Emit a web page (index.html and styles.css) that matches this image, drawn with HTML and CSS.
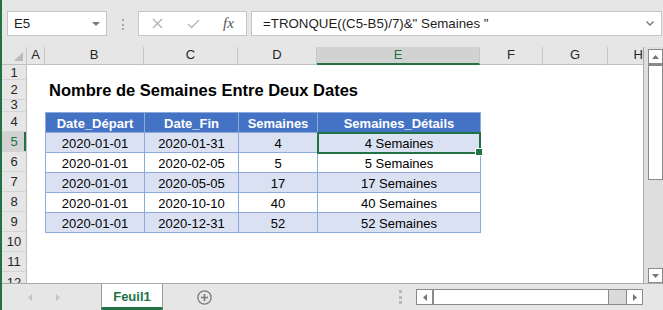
FILE: index.html
```html
<!DOCTYPE html>
<html lang="fr">
<head>
  <meta charset="UTF-8" />
  <title>Feuil1 – Nombre de Semaines</title>
  <link rel="stylesheet" href="styles.css">
</head>
<body>
<div class="app">

  <!-- Formula bar -->
  <div class="formula-bar">
    <div class="name-box">
      <span>E5</span>
      <svg width="8" height="4" viewBox="0 0 8 4"><polygon points="0,0 8,0 4,4" fill="#7a7a7a"/></svg>
    </div>
    <div class="grip"><i></i><i></i><i></i></div>
    <div class="fx-box">
      <svg class="cancel" width="11" height="11" viewBox="0 0 11 11"><path d="M1 1 L10 10 M10 1 L1 10" stroke="#b4b4b4" stroke-width="1.4" fill="none"/></svg>
      <svg class="enter" width="13" height="10" viewBox="0 0 13 10"><path d="M1 5 L4.5 8.5 L12 1" stroke="#b4b4b4" stroke-width="1.4" fill="none"/></svg>
      <span class="fx">fx</span>
    </div>
    <div class="formula">
      <span>=TRONQUE((C5-B5)/7)&amp;" Semaines "</span>
      <svg width="8" height="5" viewBox="0 0 8 5"><path d="M0.5 0.5 L4 4 L7.5 0.5" stroke="#777" stroke-width="1.4" fill="none"/></svg>
    </div>
  </div>

  <!-- Sheet -->
  <div class="work">
    <div class="sheet">
      <div class="corner">
        <svg width="9" height="9" viewBox="0 0 9 9"><polygon points="9,0 9,9 0,9" fill="#b9b9b9"/></svg>
      </div>

      <div class="col-heads">
        <div class="ch">A</div>
        <div class="ch">B</div>
        <div class="ch">C</div>
        <div class="ch">D</div>
        <div class="ch selected">E</div>
        <div class="ch">F</div>
        <div class="ch">G</div>
        <div class="ch last">H</div>
      </div>

      <div class="row-heads">
        <div class="rh">1</div>
        <div class="rh">2</div>
        <div class="rh short">3</div>
        <div class="rh">4</div>
        <div class="rh selected">5</div>
        <div class="rh">6</div>
        <div class="rh">7</div>
        <div class="rh">8</div>
        <div class="rh">9</div>
        <div class="rh">10</div>
        <div class="rh">11</div>
        <div class="rh cut">12</div>
      </div>

      <div class="cells">
        <div class="title">Nombre de Semaines Entre Deux Dates</div>

        <table class="data">
          <colgroup>
            <col class="w-b"><col class="w-c"><col class="w-d"><col class="w-e">
          </colgroup>
          <thead>
            <tr><th>Date_Départ</th><th>Date_Fin</th><th>Semaines</th><th>Semaines_Détails</th></tr>
          </thead>
          <tbody>
            <tr class="band"><td>2020-01-01</td><td>2020-01-31</td><td>4</td><td class="active">4 Semaines</td></tr>
            <tr><td>2020-01-01</td><td>2020-02-05</td><td>5</td><td>5 Semaines</td></tr>
            <tr class="band"><td>2020-01-01</td><td>2020-05-05</td><td>17</td><td>17 Semaines</td></tr>
            <tr><td>2020-01-01</td><td>2020-10-10</td><td>40</td><td>40 Semaines</td></tr>
            <tr class="band"><td>2020-01-01</td><td>2020-12-31</td><td>52</td><td>52 Semaines</td></tr>
          </tbody>
        </table>
      </div>
    </div>

    <div class="vscroll">
      <div class="sb-btn">
        <svg width="7" height="4" viewBox="0 0 7 4"><polygon points="0,4 7,4 3.5,0" fill="#777"/></svg>
      </div>
      <div class="v-thumb"></div>
      <div class="v-track"></div>
      <div class="sb-btn">
        <svg width="7" height="4" viewBox="0 0 7 4"><polygon points="0,0 7,0 3.5,4" fill="#777"/></svg>
      </div>
    </div>
  </div>

  <!-- Sheet tabs -->
  <div class="tabs">
    <div class="tab-nav">
      <svg width="4" height="7" viewBox="0 0 4 7"><polygon points="4,0 4,7 0,3.5" fill="#c3c3c3"/></svg>
      <svg width="4" height="7" viewBox="0 0 4 7"><polygon points="0,0 0,7 4,3.5" fill="#c3c3c3"/></svg>
    </div>
    <div class="tab">Feuil1</div>
    <svg class="add" width="15" height="15" viewBox="0 0 15 15">
      <circle cx="7.5" cy="7.5" r="6.6" stroke="#7b7b7b" stroke-width="1.3" fill="none"/>
      <path d="M7.5 4 V11 M4 7.5 H11" stroke="#7b7b7b" stroke-width="1.6"/>
    </svg>
    <div class="spacer"></div>
    <div class="grip"><i></i><i></i><i></i></div>
    <div class="hscroll">
      <div class="sb-btn">
        <svg width="4" height="7" viewBox="0 0 4 7"><polygon points="4,0 4,7 0,3.5" fill="#777"/></svg>
      </div>
      <div class="h-thumb"></div>
      <div class="h-track"></div>
      <div class="sb-btn">
        <svg width="4" height="7" viewBox="0 0 4 7"><polygon points="0,0 0,7 4,3.5" fill="#777"/></svg>
      </div>
    </div>
  </div>

</div>
</body>
</html>
```

FILE: styles.css
```css
:root {
  --chrome: #e6e6e6;
  --head-sel: #d2d2d2;
  --green: #217346;
  --line: #ababab;
  --table-head: #4472c4;
  --table-band: #d9e1f2;
  --table-line: #8ea9db;
  --cols: 18px 99px 94px 79px 163px 63px 65px 35px;
  --rows: 15px 20px 12px repeat(8, 20px) 11px;
}

* {
  box-sizing: border-box;
}

body {
  margin: 0;
  font-family: "Liberation Sans", Arial, sans-serif;
  background: var(--chrome);
}

.app {
  width: 663px;
  height: 310px;
  border-left: 2px solid var(--green);
  background: var(--chrome);
  overflow: hidden;
}

/* formula bar */

.formula-bar {
  height: 47px;
  display: flex;
  align-items: flex-start;
  padding-top: 11px;
}

.name-box {
  margin-left: 5px;
  width: 100px;
  height: 25px;
  border: 1px solid #c6c6c6;
  background: #fff;
  display: flex;
  align-items: center;
  justify-content: space-between;
  padding: 0 6px;
  font-size: 13.3px;
  color: #1e1e1e;
}

.grip {
  display: flex;
  flex-direction: column;
  gap: 2.5px;
}

.grip i {
  display: block;
  width: 2px;
  height: 2px;
  background: #a8a8a8;
}

.formula-bar .grip {
  margin: 8px 0 0 15px;
}

.fx-box {
  margin-left: 14px;
  width: 109px;
  height: 25px;
  border: 1px solid #c6c6c6;
  background: #fff;
  display: flex;
  align-items: center;
  padding-left: 13px;
}

.fx-box .enter {
  margin-left: 24px;
}

.fx {
  margin-left: 23px;
  font-family: "Liberation Serif", serif;
  font-style: italic;
  font-size: 15px;
  color: #555;
}

.formula {
  margin-left: 4px;
  width: 411px;
  height: 25px;
  border: 1px solid #c6c6c6;
  background: #fff;
  display: flex;
  align-items: center;
  justify-content: space-between;
  padding: 0 7px 0 11px;
  font-size: 13.3px;
  color: #1e1e1e;
}

/* sheet */

.work {
  display: flex;
  height: 236px;
}

.sheet {
  width: 641px;
  display: grid;
  grid-template-columns: 25px 616px;
  grid-template-rows: 18px 218px;
}

.corner {
  background: var(--chrome);
  border-right: 1px solid #c8c8c8;
  border-bottom: 1px solid #bfbfbf;
  display: flex;
  align-items: flex-end;
  justify-content: flex-end;
  padding: 0 3px 3px 0;
}

.col-heads {
  display: grid;
  grid-template-columns: var(--cols);
  background: var(--chrome);
}

.ch {
  border-right: 1px solid #c8c8c8;
  border-bottom: 1px solid #bfbfbf;
  font-size: 13px;
  color: #262626;
  display: flex;
  align-items: flex-end;
  justify-content: center;
  padding-bottom: 2px;
}

.ch.selected {
  background: var(--head-sel);
  color: var(--green);
  border-bottom: 2px solid var(--green);
  padding-bottom: 1px;
}

.ch.last {
  border-right: none;
  justify-content: flex-end;
  padding-right: 0;
}

.row-heads {
  display: grid;
  grid-template-rows: var(--rows);
  background: var(--chrome);
  border-right: 1px solid #bfbfbf;
}

.rh {
  border-bottom: 1px solid #d4d4d4;
  font-size: 13px;
  color: #262626;
  display: flex;
  align-items: center;
  justify-content: center;
  overflow: hidden;
  line-height: 15px;
}

.rh.short {
  align-items: flex-end;
  line-height: 12px;
}

.rh.cut {
  align-items: flex-start;
  padding-top: 3px;
  border-bottom: none;
}

.rh.selected {
  background: var(--head-sel);
  color: var(--green);
  box-shadow: inset -2px 0 0 var(--green);
}

.cells {
  background: #fff;
  display: grid;
  grid-template-columns: var(--cols);
  grid-template-rows: var(--rows);
}

.title {
  grid-column: 2 / 6;
  grid-row: 2;
  padding-left: 4px;
  font-size: 16.5px;
  font-weight: bold;
  line-height: 20px;
  color: #000;
  white-space: nowrap;
}

/* data table */

.data {
  grid-column: 2 / 6;
  grid-row: 4 / 10;
  border-collapse: collapse;
  table-layout: fixed;
  width: 435px;
  font-size: 13px;
}

.w-b { width: 99px; }
.w-c { width: 94px; }
.w-d { width: 79px; }
.w-e { width: 163px; }

.data th,
.data td {
  height: 20px;
  padding: 2px 0 0;
  line-height: 17px;
  text-align: center;
  border: 1px solid var(--table-line);
  white-space: nowrap;
}

.data th {
  background: var(--table-head);
  color: #fff;
  font-weight: bold;
}

.data td {
  color: #000;
}

.data tr.band td {
  background: var(--table-band);
}

.data td.active {
  position: relative;
}

.data td.active::after {
  content: "";
  position: absolute;
  inset: -1px -1px -2px -1px;
  border: 2px solid var(--green);
}

.data td.active::before {
  content: "";
  position: absolute;
  right: -3px;
  bottom: -4px;
  width: 6px;
  height: 6px;
  background: var(--green);
  border: 1px solid #fff;
  z-index: 1;
}

/* scrollbars */

.vscroll {
  width: 22px;
  border-left: 1px solid var(--line);
  background: #dedede;
  display: flex;
  flex-direction: column;
  padding: 2px 0 0 4px;
}

.sb-btn {
  width: 15px;
  height: 15px;
  border: 1px solid #8a8a8a;
  background: #fff;
  display: flex;
  align-items: center;
  justify-content: center;
  flex-shrink: 0;
}

.v-thumb {
  width: 15px;
  height: 116px;
  border: 1px solid #8a8a8a;
  border-top-width: 2px;
  background: #fff;
}

.v-track {
  flex: 1;
}

.tabs {
  height: 27px;
  border-top: 1px solid var(--line);
  display: flex;
  align-items: center;
}

.tab-nav {
  width: 99px;
  display: flex;
  gap: 24px;
  padding-left: 26px;
}

.tab {
  width: 62px;
  height: 26px;
  align-self: flex-start;
  background: #fff;
  border-left: 1px solid #9d9d9d;
  border-right: 1px solid #9d9d9d;
  border-bottom: 3px solid var(--green);
  color: var(--green);
  font-weight: bold;
  font-size: 13px;
  display: flex;
  align-items: center;
  justify-content: center;
  padding-top: 2px;
}

.add {
  margin-left: 34px;
}

.spacer {
  flex: 1;
}

.tabs .grip {
  margin-right: 14px;
}

.tabs .grip i {
  width: 3px;
  height: 3px;
  background: #b9b9b9;
}

.hscroll {
  width: 227px;
  height: 16px;
  margin-right: 20px;
  display: flex;
  background: #dadada;
  border: 1px solid #8a8a8a;
}

.hscroll .sb-btn {
  height: 14px;
  border: none;
}

.h-thumb {
  width: 177px;
  background: #fff;
  border-left: 2px solid #8a8a8a;
  border-right: 1px solid #8a8a8a;
}

.h-track {
  flex: 1;
  border-right: 1px solid #8a8a8a;
}
```
